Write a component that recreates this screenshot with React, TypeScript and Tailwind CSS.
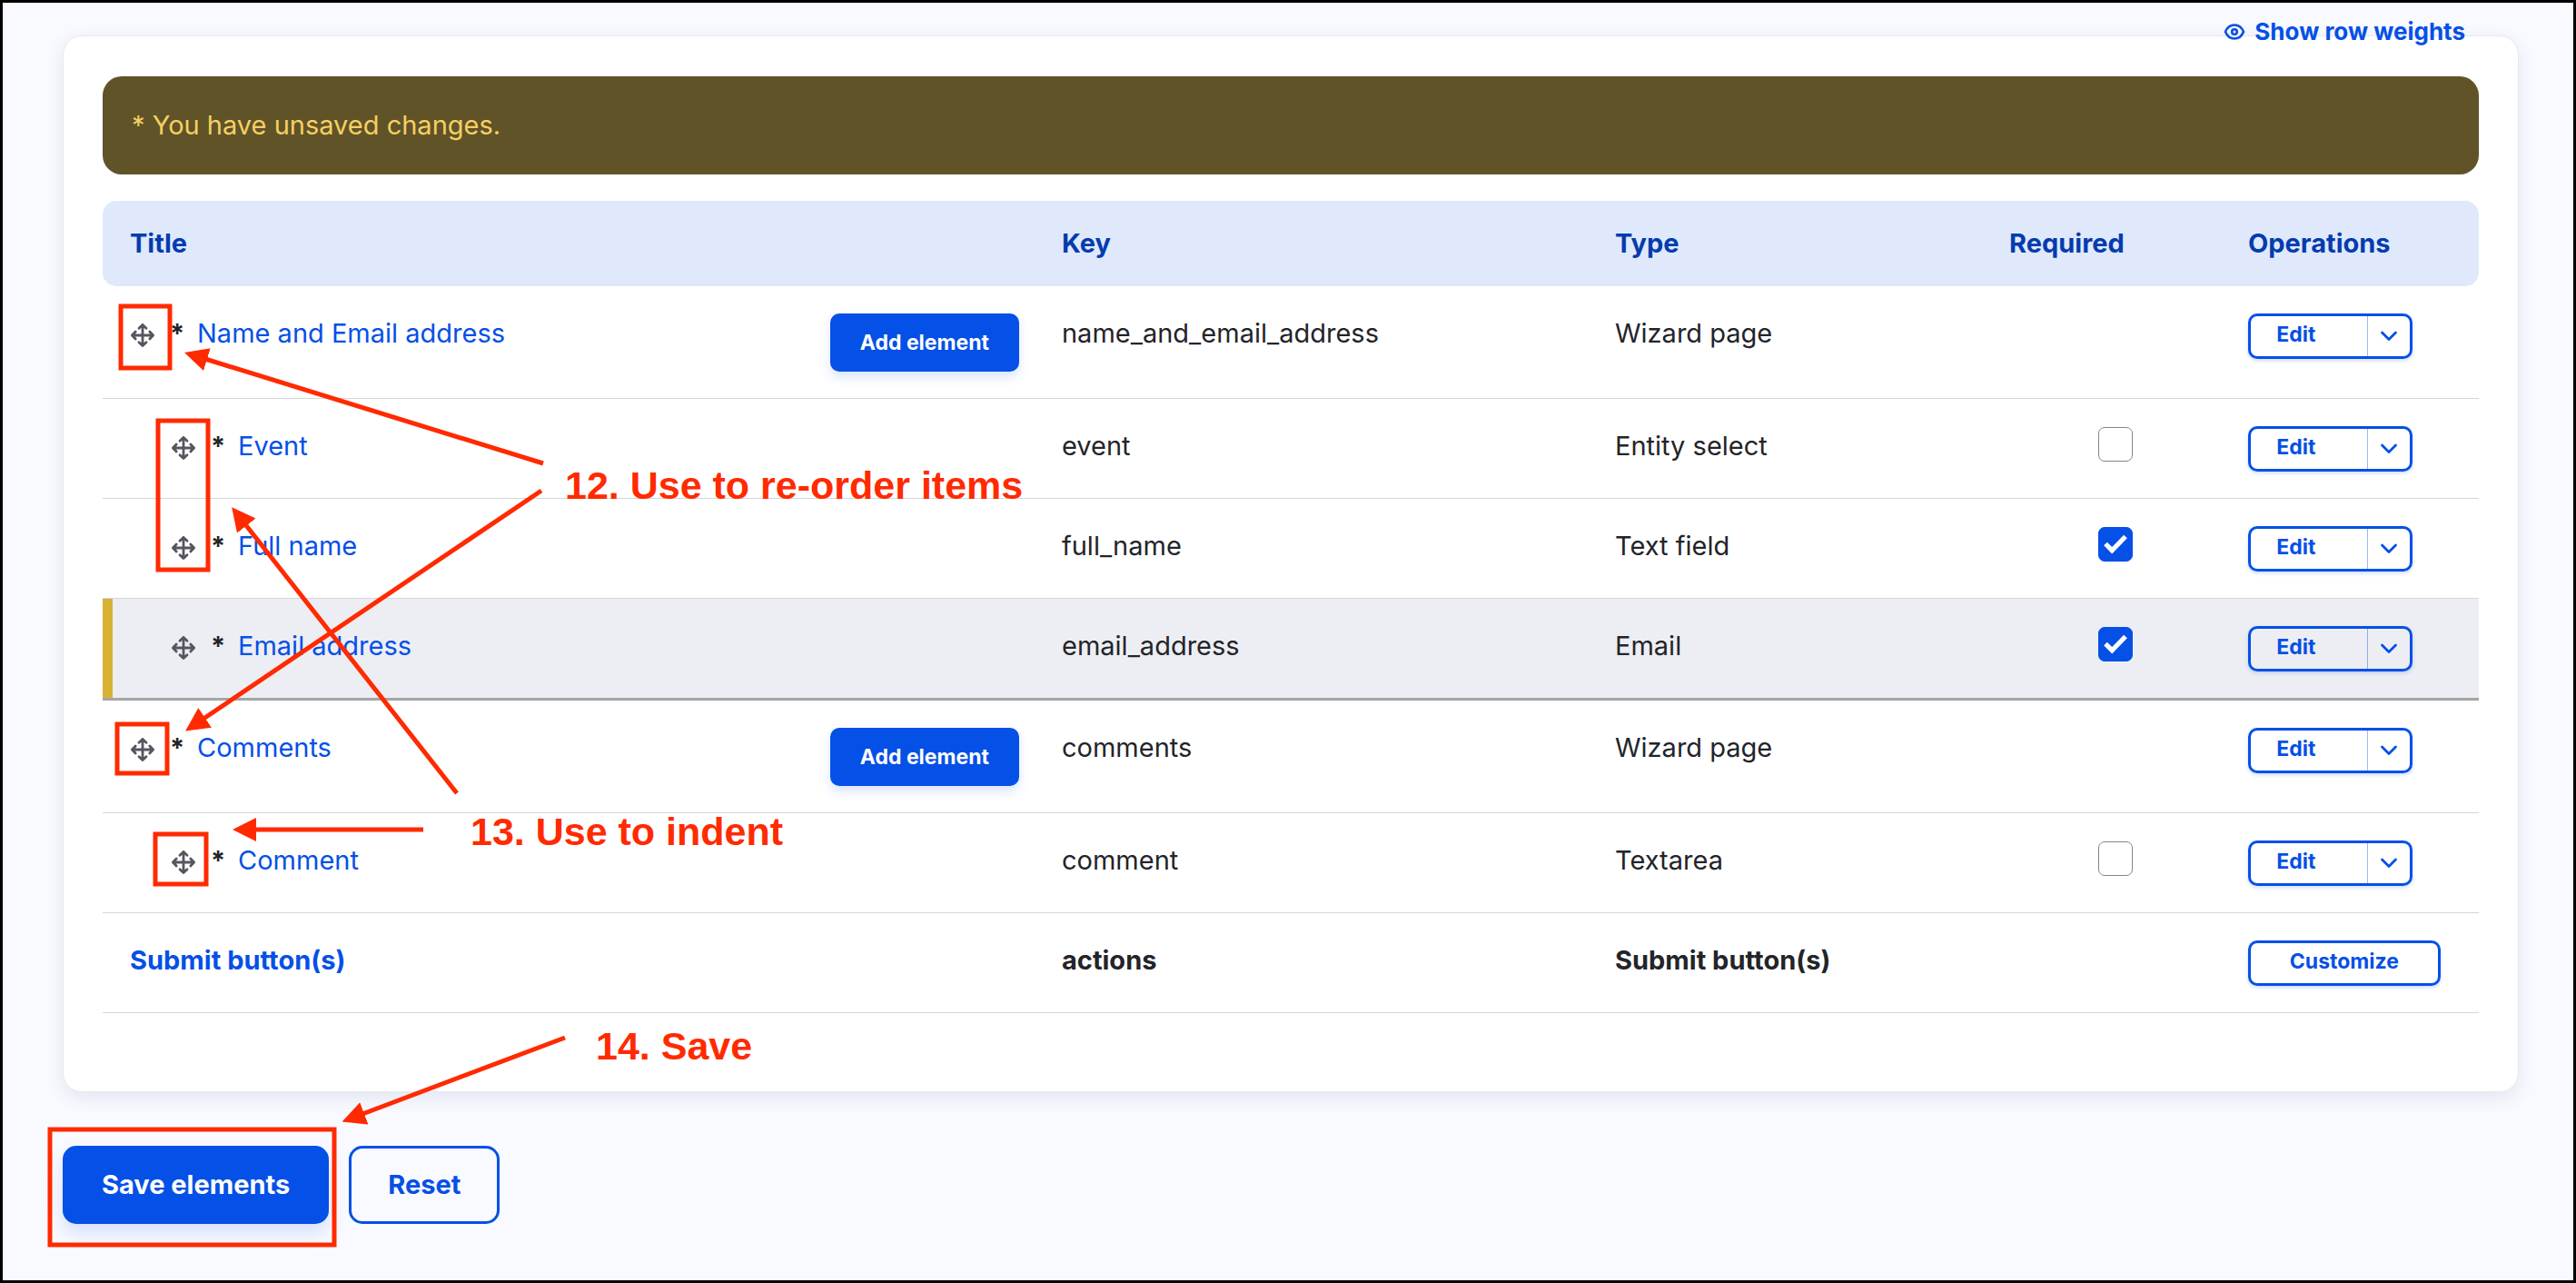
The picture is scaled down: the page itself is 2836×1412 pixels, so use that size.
type Row = {
  title: string;
  name: string;
  type: string;
  level: number;
  add?: boolean;
  required?: boolean;
  changed?: boolean;
};

const rows: Row[] = [
  { title: "Name and Email address", name: "name_and_email_address", type: "Wizard page", level: 0, add: true },
  { title: "Event", name: "event", type: "Entity select", level: 1, required: false },
  { title: "Full name", name: "full_name", type: "Text field", level: 1, required: true },
  { title: "Email address", name: "email_address", type: "Email", level: 1, required: true, changed: true },
  { title: "Comments", name: "comments", type: "Wizard page", level: 0, add: true },
  { title: "Comment", name: "comment", type: "Textarea", level: 1, required: false },
];

function MoveIcon() {
  return (
    <svg viewBox="0 0 28 28" className="size-7" fill="none" stroke="currentColor" strokeWidth="2.8" strokeLinecap="round" strokeLinejoin="round" aria-hidden="true">
      <path d="M14 2.500v23M2.500 14h23M10 6.200l4-3.800 4 3.800M10 21.800l4 3.800 4-3.800M6.200 10l-3.800 4 3.800 4M21.800 10l3.800 4-3.800 4" />
    </svg>
  );
}

function EyeIcon() {
  return (
    <svg viewBox="0 0 24 20" className="h-5 w-6" fill="none" stroke="currentColor" strokeWidth="2.6" aria-hidden="true">
      <path d="M2 10C4 5 7.500 2.500 12 2.500S20 5 22 10c-2 5-5.500 7.500-10 7.500S4 15 2 10Z" strokeLinejoin="round" />
      <circle cx="12" cy="10" r="2.800" />
    </svg>
  );
}

function EditButton({ title }: { title: string }) {
  return (
    <div className="flex h-[50px] w-[181px] rounded-[10px] border-3 border-[#0550e6] text-[#0550e6] shadow-[0_2px_4px_rgba(5,80,230,0.2)]">
      <button type="button" className="flex-1 border-r border-[#0550e6]/40 pr-7 pb-1 text-[23px] leading-[40px] font-bold">
        Edit
      </button>
      <button type="button" aria-label={`More actions for ${title}`} className="flex w-[46px] items-center justify-center">
        <svg viewBox="0 0 20 12" className="h-3 w-5" fill="none" stroke="currentColor" strokeWidth="2.8" strokeLinecap="round" strokeLinejoin="round" aria-hidden="true">
          <path d="m2.500 2 7.500 7.500L17.500 2" />
        </svg>
      </button>
    </div>
  );
}

function Required({ title, checked }: { title: string; checked: boolean }) {
  return (
    <div className="relative mx-auto size-[38px]">
      <input
        type="checkbox"
        aria-label={`${title} is required`}
        defaultChecked={checked}
        className="peer block size-[38px] appearance-none rounded-[7px] border border-[#82858f] bg-white checked:border-[#0550e6] checked:bg-[#0550e6]"
      />
      <svg viewBox="0 0 38 38" className="pointer-events-none absolute inset-0 hidden size-[38px] peer-checked:block" fill="none" stroke="white" strokeWidth="5.2" aria-hidden="true">
        <path d="m8 18.500 7.200 7.200L30 10.500" />
      </svg>
    </div>
  );
}

const cell = "px-[30px] pt-[30px] pb-[29px]";
const head = "bg-[#e0e9fc] px-[30px] text-left font-bold";

function ElementRow({ row }: { row: Row }) {
  return (
    <tr className={row.changed ? "border-b-3 border-[#a4a5a8] bg-[#edeef3] align-top" : "border-b border-[#d5d6d9] align-top"}>
      <td className={row.changed ? "pt-[30px] pr-[17px] pb-[29px] pl-[30px] shadow-[inset_11px_0_0_#d8b234]" : "pt-[30px] pr-[17px] pb-[29px] pl-[30px]"}>
        <div className="flex items-start justify-between">
          <div className={row.level ? "flex items-start pl-[45px]" : "flex items-start"}>
            <button type="button" aria-label={`Move ${row.title}`} className="mt-2.5 cursor-move text-[#55565f]">
              <MoveIcon />
            </button>
            <span className="w-[46px] pl-4 font-bold" aria-hidden="true">*</span>
            <a href="#edit" className="text-[#0550e6]">{row.title}</a>
          </div>
          {row.add && (
            <button type="button" className="h-16 rounded-[10px] bg-[#0550e6] px-[33px] text-[23px] font-bold text-white shadow-[0_6px_12px_rgba(5,80,230,0.15)]">
              Add element
            </button>
          )}
        </div>
      </td>
      <td className={cell}>{row.name}</td>
      <td className={cell}>{row.type}</td>
      <td className="pt-[31px] pl-8">
        {row.required !== undefined && <Required title={row.title} checked={row.required} />}
      </td>
      <td className={cell}>
        <EditButton title={row.title} />
      </td>
    </tr>
  );
}

const arrows = [
  "M598 510 226 395",
  "M596 540 224 791",
  "M503 873 270 577",
  "M466 913H280",
  "M622 1142 399 1226",
];

function Annotations() {
  return (
    <div className="pointer-events-none absolute -inset-[3px] font-['Liberation_Sans',Arial,sans-serif] text-[43px] leading-12 font-bold text-[#ff2a00]">
      <svg className="absolute top-0 left-0 h-[1412px] w-[1200px]" fill="none" stroke="#ff2a00" strokeWidth="5" aria-hidden="true">
        <defs>
          <marker id="head" viewBox="0 0 26 26" markerWidth="26" markerHeight="26" markerUnits="userSpaceOnUse" refX="2" refY="13" orient="auto">
            <path d="M0 0 26 13 0 26Z" fill="#ff2a00" stroke="none" />
          </marker>
        </defs>
        {arrows.map((d) => (
          <path key={d} d={d} markerEnd="url(#head)" />
        ))}
        <rect x="133" y="337" width="54" height="68" />
        <rect x="174" y="463" width="55" height="164" />
        <rect x="129" y="797" width="55" height="54" />
        <rect x="171" y="918" width="56" height="55" />
        <rect x="55" y="1243" width="313" height="127" />
      </svg>
      <p className="absolute top-[510px] left-[622px] whitespace-nowrap">12. Use to re-order items</p>
      <p className="absolute top-[891px] left-[518px] whitespace-nowrap">13. Use to indent</p>
      <p className="absolute top-[1127px] left-[656px] whitespace-nowrap">14. Save</p>
    </div>
  );
}

export default function App() {
  return (
    <div className="relative min-h-screen border-3 border-black bg-[#f9faff] pt-[36px] pr-[60px] pb-[61px] pl-[66px] font-['Inter',sans-serif] text-[29px] leading-[44px] text-[#232429]">
      <main className="relative rounded-[21px] border border-[#e8e9ee] bg-white px-[43px] pt-11 pb-[86px] shadow-[0_6px_20px_rgba(20,45,110,0.1)]">
        <button type="button" className="absolute -top-[27px] right-[58px] flex items-center gap-2.5 text-[26px] font-bold text-[#0550e6]">
          <EyeIcon />
          Show row weights
        </button>
        <div role="status" className="mb-[29px] rounded-[21px] bg-[#605327] px-8 py-8 text-[#f5d063]">* You have unsaved changes.</div>
        <table className="w-full table-fixed border-collapse">
          <colgroup>
            <col className="w-[39.22%]" />
            <col className="w-[23.28%]" />
            <col className="w-[16.59%]" />
            <col className="w-[10.05%]" />
            <col className="w-[10.86%]" />
          </colgroup>
          <thead>
            <tr className="h-[94px] text-[#043cae]">
              <th scope="col" className={`rounded-l-[15px] ${head}`}>Title</th>
              <th scope="col" className={head}>Key</th>
              <th scope="col" className={head}>Type</th>
              <th scope="col" className={head}>Required</th>
              <th scope="col" className={`rounded-r-[15px] ${head}`}>Operations</th>
            </tr>
          </thead>
          <tbody>
            {rows.map((row) => (
              <ElementRow key={row.name} row={row} />
            ))}
            <tr className="border-b border-[#d5d6d9] align-top font-bold">
              <td className={cell}>
                <a href="#actions" className="text-[#0550e6]">Submit button(s)</a>
              </td>
              <td className={cell}>actions</td>
              <td className={cell}>Submit button(s)</td>
              <td />
              <td className={cell}>
                <button type="button" className="block h-[50px] w-[212px] rounded-[10px] border-3 border-[#0550e6] pb-1 text-[23px] leading-[40px] font-bold text-[#0550e6] shadow-[0_2px_4px_rgba(5,80,230,0.2)]">
                  Customize
                </button>
              </td>
            </tr>
          </tbody>
        </table>
      </main>
      <div className="mt-[59px] flex gap-[22px]">
        <button type="button" className="h-[86px] rounded-[15px] bg-[#0550e6] px-[43px] font-bold text-white shadow-[0_10px_20px_rgba(5,80,230,0.15)]">
          Save elements
        </button>
        <button type="button" className="h-[86px] rounded-[15px] border-3 border-[#0550e6] px-10 font-bold text-[#0550e6]">
          Reset
        </button>
      </div>
      <Annotations />
    </div>
  );
}
